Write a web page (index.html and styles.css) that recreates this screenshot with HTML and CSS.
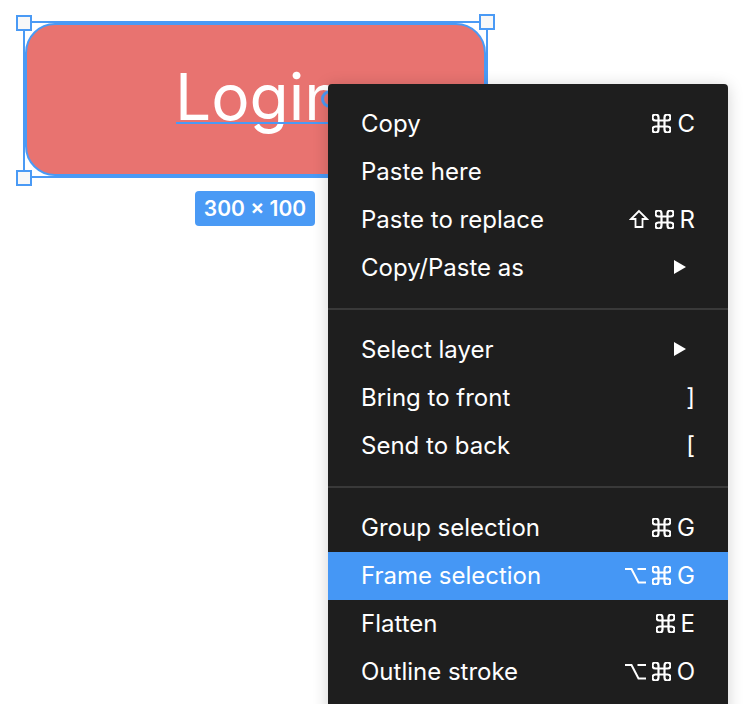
FILE: index.html
```html
<!DOCTYPE html>
<html lang="en">
<head>
<meta charset="utf-8">
<title>Context menu</title>
<link rel="stylesheet" href="styles.css">
</head>
<body>
<div class="canvas">
  <div class="selection">
    <div class="button"><span class="label">Login</span></div>
    <span class="caret-line"></span>
    <span class="caret-knob"></span>
    <span class="handle h-tl"></span>
    <span class="handle h-tr"></span>
    <span class="handle h-bl"></span>
    <div class="size-badge">300 × 100</div>
  </div>

  <div class="menu">
    <div class="section">
      <div class="item"><span>Copy</span><span class="keys"><svg class="ic cmd" viewBox="2.5 2.5 19 19"><path d="M15 6v12a3 3 0 1 0 3-3H6a3 3 0 1 0 3 3V6a3 3 0 1 0-3 3h12a3 3 0 1 0-3-3"/></svg><span>C</span></span></div>
      <div class="item"><span>Paste here</span></div>
      <div class="item"><span>Paste to replace</span><span class="keys"><svg class="ic shift" viewBox="0 0 20 20"><path d="M10 2 L2 10 H6.5 V18 H13.5 V10 H18 Z"/></svg><svg class="ic cmd" viewBox="2.5 2.5 19 19"><path d="M15 6v12a3 3 0 1 0 3-3H6a3 3 0 1 0 3 3V6a3 3 0 1 0-3 3h12a3 3 0 1 0-3-3"/></svg><span>R</span></span></div>
      <div class="item"><span>Copy/Paste as</span><span class="arrow"></span></div>
    </div>
    <div class="sep"></div>
    <div class="section">
      <div class="item"><span>Select layer</span><span class="arrow"></span></div>
      <div class="item"><span>Bring to front</span><span class="keys"><span>]</span></span></div>
      <div class="item"><span>Send to back</span><span class="keys"><span>[</span></span></div>
    </div>
    <div class="sep"></div>
    <div class="section">
      <div class="item"><span>Group selection</span><span class="keys"><svg class="ic cmd" viewBox="2.5 2.5 19 19"><path d="M15 6v12a3 3 0 1 0 3-3H6a3 3 0 1 0 3 3V6a3 3 0 1 0-3 3h12a3 3 0 1 0-3-3"/></svg><span>G</span></span></div>
      <div class="item active"><span>Frame selection</span><span class="keys"><svg class="ic opt" viewBox="0 0 21 17"><path d="M0 2H6.5L13.5 15.5H21M12.5 2H21"/></svg><svg class="ic cmd" viewBox="2.5 2.5 19 19"><path d="M15 6v12a3 3 0 1 0 3-3H6a3 3 0 1 0 3 3V6a3 3 0 1 0-3 3h12a3 3 0 1 0-3-3"/></svg><span>G</span></span></div>
      <div class="item"><span>Flatten</span><span class="keys"><svg class="ic cmd" viewBox="2.5 2.5 19 19"><path d="M15 6v12a3 3 0 1 0 3-3H6a3 3 0 1 0 3 3V6a3 3 0 1 0-3 3h12a3 3 0 1 0-3-3"/></svg><span>E</span></span></div>
      <div class="item"><span>Outline stroke</span><span class="keys"><svg class="ic opt" viewBox="0 0 21 17"><path d="M0 2H6.5L13.5 15.5H21M12.5 2H21"/></svg><svg class="ic cmd" viewBox="2.5 2.5 19 19"><path d="M15 6v12a3 3 0 1 0 3-3H6a3 3 0 1 0 3 3V6a3 3 0 1 0-3 3h12a3 3 0 1 0-3-3"/></svg><span>O</span></span></div>
    </div>
  </div>
</div>
</body>
</html>
```

FILE: styles.css
```css
* { box-sizing: border-box; }

html, body {
  margin: 0;
  padding: 0;
  background: #ffffff;
  font-family: Inter, "Noto Sans", "DejaVu Sans", sans-serif;
}

.canvas {
  position: relative;
  width: 744px;
  height: 704px;
  overflow: hidden;
}

.selection {
  position: absolute;
  left: 23px;
  top: 21px;
  width: 465px;
  height: 157px;
  border: 2px solid #4a9af5;
}

.button {
  width: 100%;
  height: 100%;
  background: #e87370;
  border: 2px solid #4a9af5;
  border-radius: 30px;
  display: flex;
  align-items: center;
  justify-content: center;
}

.label {
  color: #ffffff;
  font-size: 64px;
  font-weight: 400;
  line-height: 1;
  margin-top: -6px;
  margin-left: 6px;
}

.caret-line {
  position: absolute;
  left: 151px;
  top: 99px;
  width: 160px;
  height: 2px;
  background: #4a9af5;
}

.caret-knob {
  position: absolute;
  left: 296px;
  top: 67px;
  width: 18px;
  height: 18px;
  border: 3px solid #4a9af5;
  border-radius: 50%;
}

.handle {
  position: absolute;
  width: 16px;
  height: 16px;
  background: #f8f8f8;
  border: 2px solid #4a9af5;
}
.h-tl { left: -9px; top: -8px; }
.h-tr { right: -9px; top: -9px; }
.h-bl { left: -9px; bottom: -10px; }

.size-badge {
  position: absolute;
  left: 170px;
  top: 168px;
  width: 120px;
  height: 35px;
  border-radius: 4px;
  background: #4a9af5;
  color: #ffffff;
  font-size: 21px;
  font-weight: 600;
  display: flex;
  align-items: center;
  justify-content: center;
}

.menu {
  position: absolute;
  left: 328px;
  top: 84px;
  width: 400px;
  height: 640px;
  background: #1e1e1e;
  border-radius: 4px;
  box-shadow: 0 2px 16px rgba(0, 0, 0, 0.18);
  color: #ffffff;
  font-size: 24px;
}

.section {
  padding: 16px 0;
}

.sep {
  height: 2px;
  background: #393939;
}

.item {
  height: 48px;
  padding: 0 33px 2px 33px;
  display: flex;
  align-items: center;
  justify-content: space-between;
  white-space: nowrap;
}

.item.active {
  background: #4597f5;
}

.keys {
  display: flex;
  align-items: center;
  gap: 6px;
}

.ic {
  fill: none;
  stroke: #ffffff;
  stroke-width: 2;
  stroke-linejoin: round;
}
.ic.cmd { width: 19px; height: 19px; stroke-width: 2.2; }
.ic.shift { width: 20px; height: 20px; stroke-width: 1.8; stroke-linejoin: miter; }
.ic.opt { width: 21px; height: 17px; stroke-width: 2; stroke-linejoin: miter; }

.arrow {
  width: 0;
  height: 0;
  border-top: 7px solid transparent;
  border-bottom: 7px solid transparent;
  border-left: 12px solid #ffffff;
  margin-right: 9px;
}
```
